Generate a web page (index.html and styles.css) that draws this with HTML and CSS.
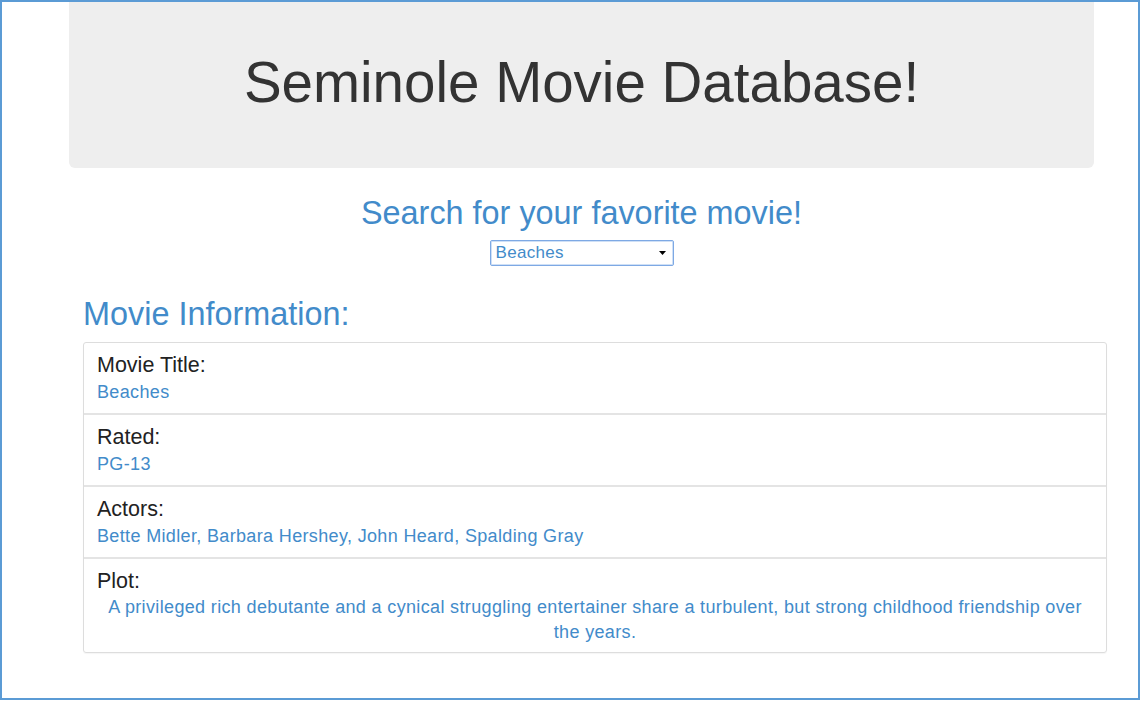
FILE: index.html
```html
<!DOCTYPE html>
<html lang="en">
<head>
<meta charset="utf-8">
<title>Seminole Movie Database</title>
<link rel="stylesheet" href="styles.css">
</head>
<body>
<div class="frame">
  <div class="container">
    <div class="jumbotron">
      <h1 class="site-title">Seminole Movie Database!</h1>
    </div>
    <h2 class="search-title">Search for your favorite movie!</h2>
    <div class="select-wrap">
      <div class="select">
        <span class="select-text">Beaches</span>
        <svg class="select-arrow" width="7" height="4" viewBox="0 0 7 4"><path d="M0 0 H7 L3.5 4 Z" fill="#000"/></svg>
      </div>
    </div>
    <section class="info">
      <h2 class="info-title">Movie Information:</h2>
      <div class="panel">
        <div class="row">
          <div class="label">Movie Title:</div>
          <div class="value">Beaches</div>
        </div>
        <div class="row">
          <div class="label">Rated:</div>
          <div class="value">PG-13</div>
        </div>
        <div class="row">
          <div class="label">Actors:</div>
          <div class="value">Bette Midler, Barbara Hershey, John Heard, Spalding Gray</div>
        </div>
        <div class="row row-last">
          <div class="label">Plot:</div>
          <div class="value plot">A privileged rich debutante and a cynical struggling entertainer share a turbulent, but strong childhood friendship over the years.</div>
        </div>
      </div>
    </section>
  </div>
</div>
</body>
</html>
```
FILE: styles.css
```css
html, body {
  margin: 0;
  padding: 0;
  background: #fff;
}

body {
  font-family: "Liberation Sans", Arial, Helvetica, sans-serif;
  color: #333;
  height: 701px;
}

.frame {
  width: 1140px;
  height: 700px;
  border: 2px solid #5b9bd5;
  box-sizing: border-box;
}

.container {
  margin-left: 67px;
  width: 1025px;
}

.jumbotron {
  height: 166px;
  box-sizing: border-box;
  padding-top: 50px;
  background: #eeeeee;
  border-radius: 0 0 6px 6px;
}

.site-title {
  margin: 0;
  font-size: 56.5px;
  line-height: 62px;
  font-weight: normal;
  text-align: center;
  color: #333;
}

.search-title {
  margin: 27px 0 0;
  font-size: 32.4px;
  line-height: 36px;
  font-weight: normal;
  text-align: center;
  color: #428bca;
}

.select-wrap {
  display: flex;
  justify-content: center;
  margin-top: 9px;
}

.select {
  width: 184px;
  height: 26px;
  box-sizing: border-box;
  border: 1px solid #7ea9e4;
  border-radius: 2px;
  box-shadow: inset 0 0 0 1px #cfe0f6;
  display: flex;
  align-items: center;
  justify-content: space-between;
  padding: 0 7px 0 5px;
  background: #fff;
}

.select-text {
  font-size: 17px;
  letter-spacing: 0.3px;
  color: #428bca;
}

.select-arrow {
  display: block;
}

.info {
  margin-left: 14px;
  width: 1024px;
}

.info-title {
  margin: 30px 0 0;
  font-size: 32.4px;
  line-height: 36px;
  font-weight: normal;
  color: #428bca;
}

.panel {
  margin-top: 10px;
  border: 1px solid #dddddd;
  border-radius: 3px;
  box-shadow: 0 1px 1px rgba(0, 0, 0, 0.04);
}

.row {
  padding: 10px 13px 7px;
  border-bottom: 2px solid #e4e4e4;
}

.row-last {
  border-bottom: none;
}

.label {
  font-size: 21.5px;
  line-height: 24px;
  color: #222;
  margin-bottom: 2px;
}

.value {
  font-size: 18px;
  line-height: 27px;
  letter-spacing: 0.35px;
  color: #428bca;
}

.plot {
  text-align: center;
  line-height: 25px;
}
```
